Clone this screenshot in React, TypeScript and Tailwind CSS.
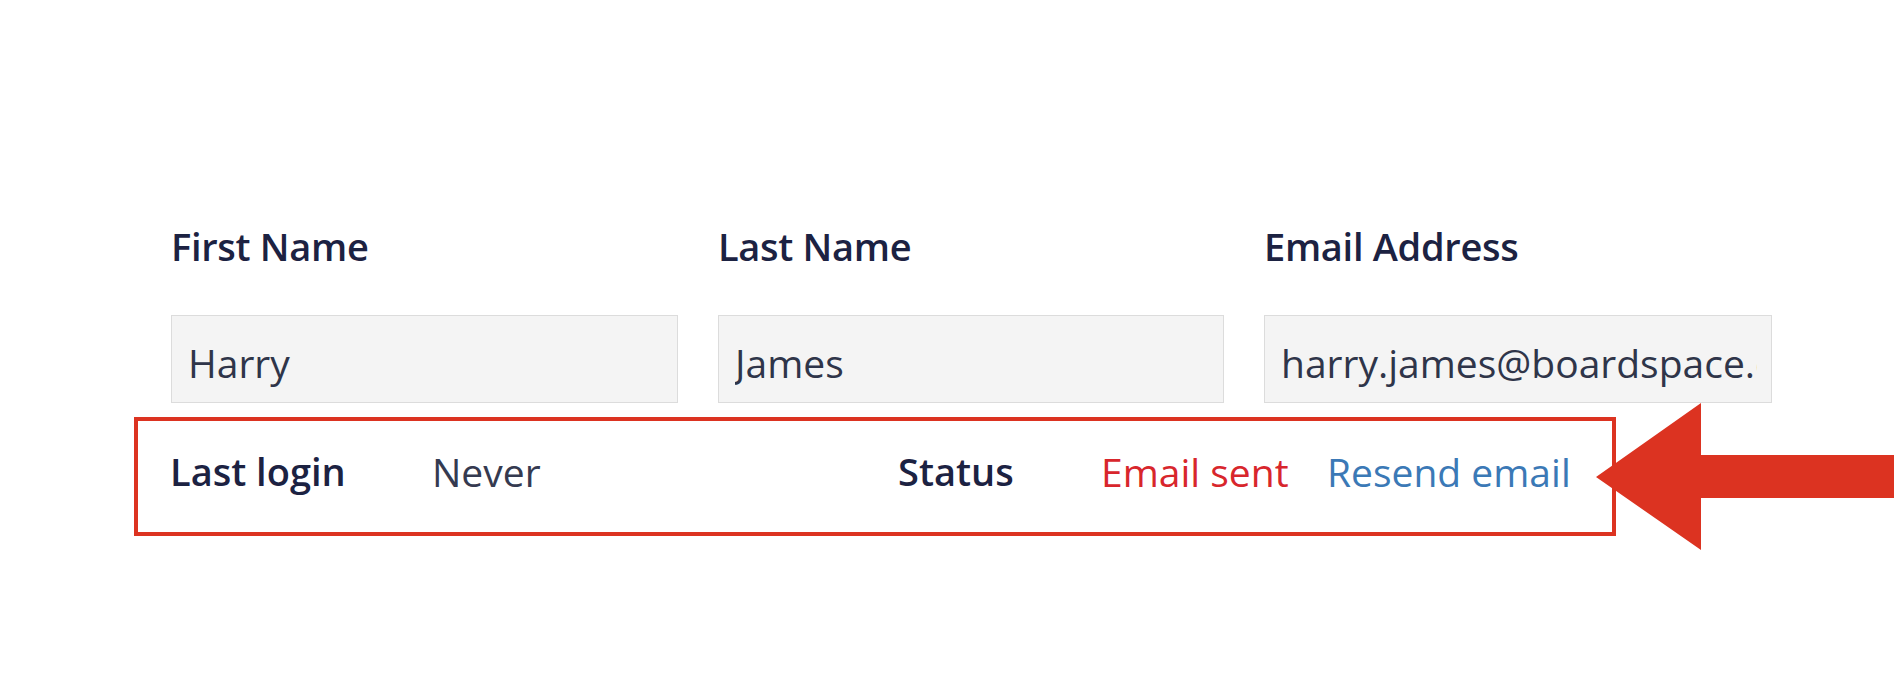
import React from "react";

const fields = [
  { label: "First Name", value: "Harry" },
  { label: "Last Name", value: "James" },
  { label: "Email Address", value: "harry.james@boardspace.com" },
];

export default function App() {
  return (
    <div className="relative w-[1894px] h-[700px] overflow-hidden bg-white font-['Open_Sans',_'Noto_Sans',_sans-serif]">
      <div className="pt-[227px] pl-[171px]">
        <div className="grid grid-cols-[507px_506px_508px] gap-x-[40px]">
          {fields.map((f) => (
            <div key={f.label} className="flex flex-col">
              <label className="text-[38px] leading-[38px] font-semibold text-[#1c2242] tracking-[-0.3px]">
                {f.label}
              </label>
              <input
                readOnly
                value={f.value}
                className="mt-[50px] h-[88px] w-full box-border border border-[#dcdcdc] bg-[#f4f4f4] pl-[16px] pr-[14px] pt-[6px] text-[39px] text-[#2f3549] outline-none"
              />
            </div>
          ))}
        </div>
      </div>

      <div className="ml-[134px] mt-[14px] w-[1482px] h-[119px] box-border border-4 border-[#dc3321] flex items-center pl-[32px] pb-[11px] text-[39px] leading-[39px]">
        <span className="w-[262px] text-[38px] font-semibold text-[#1c2242]">Last login</span>
        <span className="w-[466px] text-[#353a50]">Never</span>
        <span className="w-[203px] text-[38px] font-semibold text-[#1c2242]">Status</span>
        <span className="w-[226px] text-[#d8262c]">Email sent</span>
        <a href="#" className="text-[#3b79b6]">Resend email</a>
      </div>

      <svg
        className="absolute left-[1590px] top-[400px]"
        width="304"
        height="155"
        viewBox="0 0 304 155"
      >
        <polygon
          points="6,77 111,3 111,55 304,55 304,98 111,98 111,150"
          fill="#dc3321"
        />
      </svg>
    </div>
  );
}
